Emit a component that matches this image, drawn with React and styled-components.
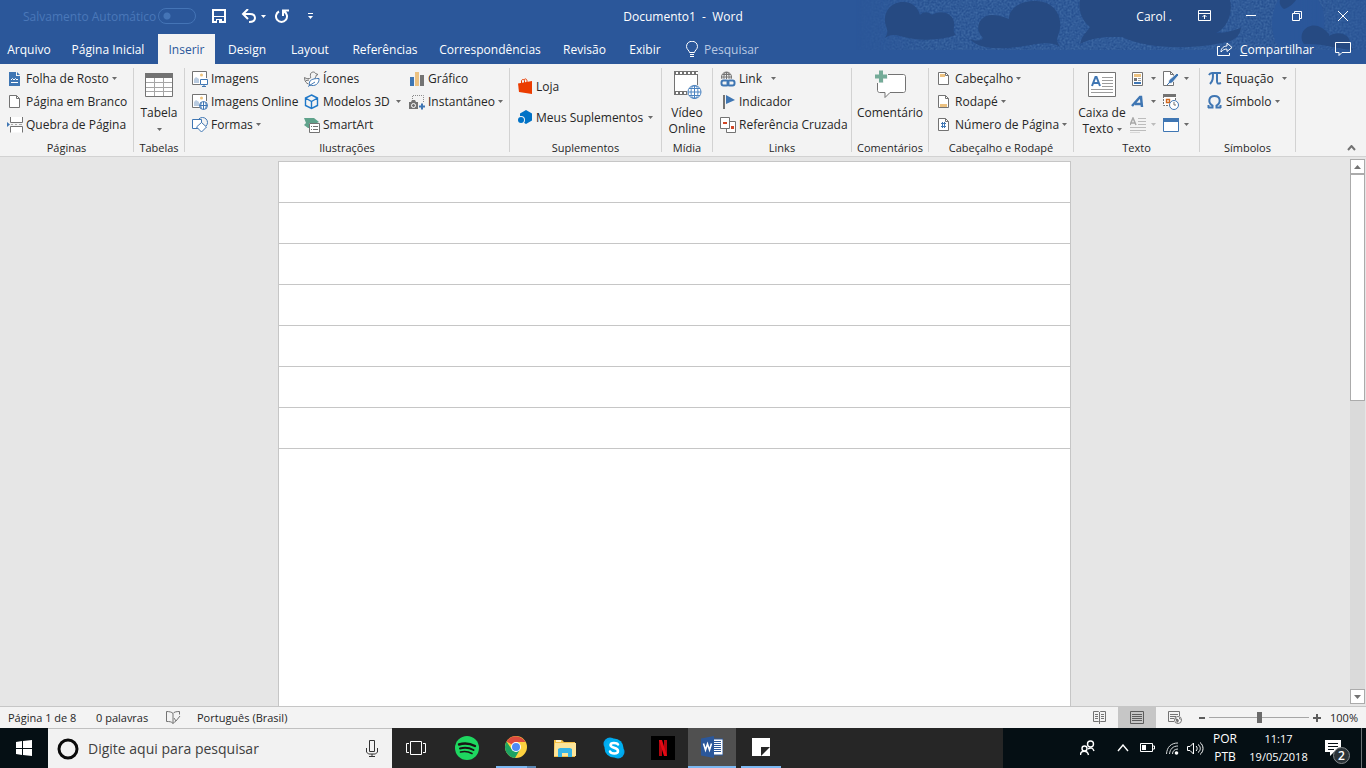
import React, { useState } from "react";
import styled, { createGlobalStyle } from "styled-components";

const GlobalStyle = createGlobalStyle`
  * {
    box-sizing: border-box;
  }

  body {
    margin: 0;
    overflow: hidden;
    font-family: "Open Sans", "Noto Sans", sans-serif;
    font-size: 12px;
    color: #262626;
  }

  button, input {
    font: inherit;
    color: inherit;
    margin: 0;
    padding: 0;
    border: none;
    background: none;
  }

  svg {
    display: block;
    flex: none;
  }
`;

const Window = styled.div`
  height: 100vh;
  display: flex;
  flex-direction: column;
  white-space: nowrap;
`;

/* ---------- header ---------- */

const Header = styled.header`
  position: relative;
  background: #2b579a;
  color: #ffffff;
`;

const Clouds = styled.svg`
  position: absolute;
  top: 0;
  right: 0;
`;

const TitleBar = styled.div`
  position: relative;
  display: grid;
  grid-template-columns: 1fr auto 1fr;
  align-items: center;
  height: 32px;
`;

const QuickAccess = styled.div`
  display: flex;
  align-items: center;
  padding-left: 23px;
`;

const AutoSave = styled.label`
  display: flex;
  align-items: center;
  justify-content: space-between;
  width: 173px;
  color: #4a78b9;
`;

const Toggle = styled.input`
  appearance: none;
  width: 38px;
  height: 16px;
  border: 1px solid #4474b6;
  border-radius: 8px;
  background: radial-gradient(circle at 8px 7px, #4474b6 3px, transparent 4px);
`;

const QuickButton = styled.button`
  display: flex;
  align-items: center;
  justify-content: center;
  gap: 4px;
  height: 24px;
  margin-left: ${(p) => p.$gap}px;
`;

const Title = styled.h1`
  margin: 0;
  font-size: 12px;
  font-weight: 400;
  white-space: pre;
`;

const WindowControls = styled.div`
  display: flex;
  align-items: center;
  justify-content: flex-end;
`;

const UserButton = styled.button`
  padding-right: 10px;
`;

const ControlButton = styled.button`
  display: flex;
  align-items: center;
  justify-content: center;
  width: 46px;
  height: 32px;
`;

const TabRow = styled.nav`
  position: relative;
  display: flex;
  align-items: center;
  height: 32px;
  padding-top: 2px;
`;

const Tab = styled.button`
  width: ${(p) => p.$width}px;
  height: 30px;
  text-align: center;
  background: ${(p) => (p.$active ? "#f3f3f3" : "transparent")};
  color: ${(p) => (p.$active ? "#2b579a" : "#ffffff")};
`;

const TellMe = styled.label`
  display: flex;
  align-items: center;
  gap: 6px;
  margin-left: 14px;
`;

const TellMeInput = styled.input`
  width: 90px;
  outline: none;

  &::placeholder {
    color: #b8c8e2;
    opacity: 1;
  }
`;

const ShareArea = styled.div`
  display: flex;
  align-items: center;
  gap: 21px;
  margin-left: auto;
  padding-right: 15px;
`;

const ShareButton = styled.button`
  display: flex;
  align-items: center;
  gap: 7px;
`;

/* ---------- ribbon ---------- */

const Ribbon = styled.div`
  display: flex;
  height: 93px;
  background: #f3f3f3;
  border-bottom: 1px solid #d2d2d2;
`;

const GroupBox = styled.section`
  display: flex;
  width: ${(p) => p.$width}px;
`;

const GroupContent = styled.div`
  display: flex;
  flex-direction: column;
  flex: 1;
  min-width: 0;
`;

const GroupBody = styled.div`
  display: flex;
  height: 76px;
  padding: 3px 0 4px ${(p) => p.$pad}px;
`;

const GroupLabel = styled.h2`
  margin: 0;
  font-size: 11px;
  font-weight: 400;
  line-height: 16px;
  text-align: center;
`;

const Divider = styled.div`
  width: 1px;
  margin: 4px 0;
  background: #d2d2d2;
`;

const Column = styled.div`
  display: flex;
  flex-direction: column;
  justify-content: center;
  width: ${(p) => (p.$width ? `${p.$width}px` : "100%")};
`;

const Command = styled.button`
  display: flex;
  align-items: center;
  gap: 3px;
  width: 100%;
  height: ${(p) => (p.$tall ? 31 : 23)}px;
  padding-right: 8px;
`;

const CommandArrow = styled.span`
  margin-left: ${(p) => (p.$split ? "auto" : "0")};
`;

const BigCommand = styled.button`
  display: flex;
  flex-direction: column;
  align-items: center;
  width: ${(p) => (p.$width ? `${p.$width}px` : "100%")};
  height: 72px;
  line-height: 16px;
`;

const BigIcon = styled.span`
  display: flex;
  align-items: center;
  justify-content: center;
  height: 36px;
  margin-bottom: 2px;
`;

const BigLine = styled.span`
  display: flex;
  align-items: center;
  gap: 3px;
  height: 16px;
`;

const IconCommand = styled.button`
  display: flex;
  align-items: center;
  gap: 5px;
  height: 23px;
`;

const Collapse = styled.button`
  align-self: flex-end;
  margin-left: auto;
  padding: 0 10px 5px;
`;

/* ---------- document ---------- */

const Workspace = styled.main`
  display: flex;
  flex: 1;
  min-height: 0;
  background: #e6e6e6;
`;

const Canvas = styled.div`
  display: flex;
  flex: 1;
  flex-direction: column;
  align-items: center;
  padding-top: 4px;
  overflow: hidden;
`;

const Sheet = styled.article`
  flex: ${(p) => (p.$last ? "1" : "none")};
  width: 793px;
  max-width: 100%;
  height: 41px;
  background: #ffffff;
  border: 1px solid #c6c6c6;
  border-top: none;
  border-bottom-width: ${(p) => (p.$last ? 0 : 1)}px;

  &:first-child {
    height: 42px;
    border-top: 1px solid #c6c6c6;
  }
`;

const ScrollBar = styled.div`
  display: flex;
  flex-direction: column;
  width: 15px;
  margin: 2px 1px;
  background: #dadada;
`;

const ScrollButton = styled.button`
  display: flex;
  align-items: center;
  justify-content: center;
  height: 15px;
  background: #ffffff;
  border: 1px solid #ababab;
`;

const ScrollTrack = styled.div`
  flex: 1;
`;

const ScrollThumb = styled.div`
  height: 44%;
  background: #ffffff;
  border: 1px solid #ababab;
`;

/* ---------- status bar ---------- */

const StatusBar = styled.footer`
  display: flex;
  align-items: center;
  height: 22px;
  padding-left: 8px;
  background: #f3f3f3;
  border-top: 1px solid #c6c6c6;
  font-size: 11px;
`;

const StatusItem = styled.button`
  width: ${(p) => p.$width}px;
  text-align: left;
`;

const ViewButton = styled.button`
  display: flex;
  align-items: center;
  justify-content: center;
  width: 38px;
  height: 21px;
  background: ${(p) => (p.$active ? "#c6c6c6" : "transparent")};
`;

const ViewArea = styled.div`
  display: flex;
  align-items: center;
  margin-left: auto;
`;

const ZoomArea = styled.div`
  display: flex;
  align-items: center;
  gap: 4px;
  padding: 0 8px 0 5px;
`;

const ZoomSlider = styled.input`
  appearance: none;
  width: 100px;
  height: 12px;
  background: linear-gradient(#a6a6a6, #a6a6a6) center / 100% 1px no-repeat;

  &::-webkit-slider-thumb {
    appearance: none;
    width: 5px;
    height: 11px;
    background: #6a6a6a;
  }
`;

const ZoomValue = styled.button`
  margin-left: 5px;
`;

/* ---------- taskbar ---------- */

const TaskBar = styled.div`
  display: flex;
  height: 40px;
  background: #050f14;
  color: #ffffff;
`;

const StartButton = styled.button`
  display: flex;
  align-items: center;
  justify-content: center;
  width: 48px;
`;

const SearchBox = styled.label`
  display: flex;
  align-items: center;
  width: 344px;
  padding: 0 14px 0 9px;
  background: #f2f2f2;
  border-top: 1px solid #c0c0c0;
  color: #333333;
`;

const SearchInput = styled.input`
  flex: 1;
  min-width: 0;
  margin-left: 9px;
  font-size: 14px;
  outline: none;

  &::placeholder {
    color: #404040;
    opacity: 1;
  }
`;

const AppList = styled.div`
  display: flex;
  flex: 1;
  gap: 1px;
  background: #262626;
`;

const TaskButton = styled.button`
  display: flex;
  flex-direction: column;
  align-items: center;
  width: 48px;
  margin-right: ${(p) => (p.$first ? 2 : 0)}px;
  background: ${(p) => (p.$active ? "#505050" : "transparent")};
`;

const TaskIcon = styled.span`
  display: flex;
  align-items: center;
  flex: 1;
`;

const Running = styled.span`
  width: ${(p) => (p.$wide ? 48 : 40)}px;
  height: 2px;
  background: #7cb8f2;
  border-right: ${(p) => (p.$stacked ? "9px solid #5b87b3" : "none")};
`;

const Tray = styled.div`
  display: flex;
  align-items: center;
  width: 363px;
  padding-left: 77px;
`;

const TrayButton = styled.button`
  display: flex;
  align-items: center;
  margin-right: ${(p) => p.$gap}px;
`;

const TrayText = styled.button`
  width: ${(p) => p.$width}px;
  text-align: center;
  line-height: 18px;
  font-size: ${(p) => p.$size || 12}px;
`;

const ActionCenter = styled.button`
  position: relative;
  margin-left: 9px;
`;

const Badge = styled.span`
  position: absolute;
  left: 8px;
  top: 8px;
  width: 17px;
  height: 17px;
  border: 1px solid #858a8d;
  border-radius: 50%;
  background: #2b3338;
  font-size: 12px;
  font-weight: 600;
  line-height: 15px;
  text-align: center;
`;

const ShowDesktop = styled.button`
  align-self: stretch;
  width: 5px;
  margin-left: auto;
  border-left: 1px solid #6b7275;
`;

/* ---------- icons ---------- */

const GRAY = "#737373";
const BLUE = "#3f76b3";

const Svg = ({ w = 16, h = 16, children, ...rest }) => (
  <svg width={w} height={h} viewBox={`0 0 ${w} ${h}`} fill="none" aria-hidden="true" {...rest}>
    {children}
  </svg>
);

const Arrow = ({ color = "#6a6a6a" }) => (
  <Svg w={5} h={3}>
    <path d="M0 0h5L2.500 3z" fill={color} />
  </Svg>
);

const SheetOutline = ({ x = 2, children }) => (
  <Svg>
    <path d={`M${x + 0.5} 1.5h7l3 3v9h-10z`} fill="#fff" stroke={GRAY} />
    <path d={`M${x + 7.5} 1.5v3h3`} stroke={GRAY} />
    {children}
  </Svg>
);

const CoverIcon = () => (
  <Svg>
    <path d="M2 1h7v4h4v10H2z" fill={BLUE} />
    <path d="M10 1l3 3h-3z" fill={BLUE} />
    <path d="M4 9l1.500-1.500L7 9l1.500-1.500L10 9l1-1M4 11.500h7" stroke="#fff" />
  </Svg>
);

const BreakIcon = () => (
  <Svg>
    <path d="M3.500 0v5.500h12V0M3.500 15.500v-6h12v6" fill="#fff" stroke={GRAY} />
    <path d="M0 5l3 2.500L0 10z" fill={BLUE} />
    <path d="M4 7.500h2m2 0h2m2 0h3" stroke="#aaa" />
  </Svg>
);

const TableIcon = () => (
  <Svg w={28} h={26}>
    <path d="M.5 1.500h27v23H.5z" fill="#fff" stroke={GRAY} />
    <path d="M0 1h28v5H0z" fill={GRAY} />
    <path d="M9.500 6v18M18.500 6v18M1 10.500h26M1 15.500h26M1 19.500h26" stroke="#a6a6a6" />
  </Svg>
);

const PictureBase = () => (
  <>
    <path d="M14.500 7V.5H.5v13H8" fill="#fff" stroke={GRAY} />
    <path d="M2 12V8l2-2 3 2v4z" fill="#b9cbe0" />
    <circle cx="9.500" cy="4" r="1.500" fill="#eec27c" />
  </>
);

const ImagesIcon = () => (
  <Svg>
    <PictureBase />
    <path d="M8.500 8.500h7v5h-7z" fill="#fff" stroke={BLUE} />
    <path d="M12 13v2m-2 .5h4" stroke={BLUE} />
  </Svg>
);

const ImagesOnlineIcon = () => (
  <Svg>
    <PictureBase />
    <circle cx="11.500" cy="11.500" r="4" fill="#fff" stroke={BLUE} />
    <path d="M7.500 11.500h8M11.500 7.500v8M9.500 8.500c-1 2-1 4 0 6M13.500 8.500c1 2 1 4 0 6" stroke={BLUE} />
  </Svg>
);

const ShapesIcon = () => (
  <Svg>
    <circle cx="10.500" cy="5.500" r="5" stroke={BLUE} />
    <path d="M.5 2.500h9v9h-9z" fill="#fff" stroke={BLUE} />
    <path d="M9.500 5.500l5 4.500-5 5-5-5z" fill="#fff" stroke={BLUE} />
  </Svg>
);

const IconsIcon = () => (
  <Svg>
    <path
      d="M.5 6.500c2 1.500 5 1.500 6 .5.500-1-.5-2 0-4 .5-2 4-3 5-.5l2.500 1-2 1c0 2-1 3-2 3M.5 6.500c0 4 2 6 4 6.500M2 9.500l3-.5"
      stroke={GRAY}
    />
    <path d="M5.500 14c-1-5 3-6.500 9.500-6.500.5 5-4 8.500-9.500 6.500zM4 15.500l7-4.500" fill="#fff" stroke={BLUE} />
  </Svg>
);

const CubeIcon = () => (
  <Svg>
    <path d="M7.500 1l6 3v7.500l-6 3-6-3V4zM1.500 4l6 3.500 6-3.500M7.500 7.500v7" stroke="#1f78c8" strokeWidth="1.400" />
  </Svg>
);

const SmartArtIcon = () => (
  <Svg>
    <path d="M0 1h10l5 4-2 1H5v5H4L0 8l2-2z" fill="#5fa28b" />
    <path d="M5.500 6.500h10v9h-10z" fill="#fff" stroke={GRAY} />
    <path d="M7 9.500h1m1 0h5M7 12.500h1m1 0h5" stroke={GRAY} />
  </Svg>
);

const ChartIcon = () => (
  <Svg>
    <path d="M1 6h4v9H1z" fill={BLUE} />
    <path d="M6 1h4v14H6z" fill="#ecc180" />
    <path d="M11 4h4v11h-4z" fill={GRAY} />
  </Svg>
);

const ScreenshotIcon = () => (
  <Svg>
    <path d="M3.500 5V1.500h11V9" stroke="#8a8a8a" strokeDasharray="1 1" />
    <path d="M0 8h2l1-2h3l1 2h2v7H0z" fill={GRAY} />
    <circle cx="4.500" cy="11.500" r="2" fill={GRAY} stroke="#fff" />
    <path d="M10 12.500h6M13 9.500v6" stroke={BLUE} strokeWidth="2" />
  </Svg>
);

const StoreIcon = () => (
  <Svg>
    <path d="M1 5.500L15 3v13L2 14z" fill="#eb3c00" />
    <path d="M4.500 6V3c0-2 3-2 3 0v2M7 2c1-2 3-1 3 1v2" stroke="#eb3c00" />
  </Svg>
);

const AddinsIcon = () => (
  <Svg>
    <path d="M3 4.500L9 1l6 3.500v7L9 15l-6-3.500z" fill="#0072c6" />
    <circle cx="4" cy="11" r="4" fill="#f3f3f3" />
    <circle cx="4" cy="11" r="3" fill="#0072c6" />
  </Svg>
);

const VideoIcon = () => (
  <Svg w={29} h={30}>
    <path d="M1.500 1.500h23v23h-23z" fill="#fff" stroke={GRAY} />
    <path d="M1 3h24M1 23h24" stroke={GRAY} strokeWidth="4" />
    <path d="M3 3h22M3 23h22" stroke="#fff" strokeWidth="2" strokeDasharray="2 2" />
    <circle cx="21.500" cy="22" r="7.500" fill="#f3f3f3" />
    <circle cx="21.500" cy="22" r="6.500" fill="#fff" stroke="#4b83c0" />
    <path d="M15 22h13M21.500 15.500v13M16 18.500h11M16 25.500h11" stroke="#4b83c0" />
    <ellipse cx="21.500" cy="22" rx="3.500" ry="6.500" stroke="#4b83c0" />
  </Svg>
);

const LinkIcon = () => (
  <Svg>
    <circle cx="6.500" cy="6" r="5" stroke={GRAY} />
    <path d="M1.500 6h10M6.500 1v8M2.500 3.500h8M4.500 9c-1-2-1-5 1-8M8.500 9c1-2 1-5-1-8" stroke={GRAY} />
    <path d="M0 8h16v8H0z" fill="#f3f3f3" />
    <rect x="1.500" y="9.500" width="7" height="5" rx="2" stroke={BLUE} strokeWidth="2" />
    <rect x="7.500" y="9.500" width="7" height="5" rx="2" stroke={BLUE} strokeWidth="2" />
  </Svg>
);

const FlagIcon = () => (
  <Svg>
    <path d="M4 1v14" stroke={GRAY} strokeWidth="2" />
    <path d="M6 1l9 5-9 4z" fill={BLUE} />
  </Svg>
);

const CrossRefIcon = () => (
  <Svg>
    <path d="M6.500 4.500h9v11h-9z" fill="#fff" stroke={GRAY} />
    <path d="M.5.5h9v11h-9z" fill="#fff" stroke={GRAY} />
    <path d="M3 5h4v2H3zM11 9h3v3h-3z" fill="#d24726" />
  </Svg>
);

const CommentIcon = () => (
  <Svg w={32} h={30}>
    <path
      d="M3.500 6.500c0-2 1-2 2-2h24c1 0 2 1 2 2v14c0 1-1 2-2 2H16l-5 5v-5H5.500c-1 0-2-1-2-2z"
      fill="#fff"
      stroke={GRAY}
    />
    <path d="M0 0h14v9h-4v4H0z" fill="#f3f3f3" />
    <path d="M1 6.500h12M7 .5v12" stroke="#74ab98" strokeWidth="4" />
  </Svg>
);

const TextBoxIcon = () => (
  <Svg w={28} h={26}>
    <path d="M.5.5h27v24H.5z" fill="#fff" stroke={GRAY} />
    <path d="M4 14L7.500 5h1L12 14M5.500 11h5" stroke={BLUE} strokeWidth="2" />
    <path d="M14 5.500h11M14 8.500h11M14 11.500h11M14 14.500h11M3 17.500h22M3 20.500h22" stroke="#9c9c9c" />
  </Svg>
);

const QuickPartsIcon = () => (
  <Svg>
    <path d="M2.500 1.500h10v13h-10z" fill="#fff" stroke={GRAY} />
    <path d="M4 3h7v3H4z" fill="#ecc180" />
    <path d="M4 7h3v3H4z" fill={GRAY} />
    <path d="M8 7.500h3M8 9.500h3" stroke="#9c9c9c" />
    <path d="M4 11h7v2H4z" fill={BLUE} />
  </Svg>
);

const WordArtIcon = () => (
  <Svg>
    <path d="M2 12L10 3h1l1 10M5 10h6" stroke={BLUE} strokeWidth="2.500" />
  </Svg>
);

const DropCapIcon = () => (
  <Svg>
    <path d="M0 8L3 1l3 7M1 6h4" stroke="#a8a8a8" strokeWidth="1.500" />
    <path d="M8 1.500h8M8 4.500h8M8 7.500h8M0 10.500h16M0 13.500h16M0 16h10" stroke="#bcbcbc" />
  </Svg>
);

const SignatureIcon = () => (
  <Svg>
    <path d="M.5.500h7l3 3v11H.5z" fill="#fff" stroke={GRAY} />
    <path d="M7.500.5v3h3" stroke={GRAY} />
    <path d="M5 13l1-4 8-7 2 2-7 8z" fill={BLUE} stroke="#f3f3f3" />
    <path d="M4 14l3-3" stroke={BLUE} />
  </Svg>
);

const DateIcon = () => (
  <Svg>
    <path d="M.5 2v9.500h12V2" fill="#fff" stroke={GRAY} strokeDasharray="2 1" />
    <path d="M0 0h13v3H0z" fill={GRAY} />
    <path d="M3.500 5.500h3v3h-3z" stroke="#d2691e" strokeWidth="1.400" />
    <circle cx="11" cy="11" r="4.500" fill="#fff" stroke={BLUE} />
    <path d="M11 8v3h2" stroke={GRAY} />
  </Svg>
);

const ObjectIcon = () => (
  <Svg>
    <path d="M.5 1.500h15v13H.5z" fill="#fff" stroke={BLUE} />
    <path d="M0 1h16v4H0z" fill={BLUE} />
  </Svg>
);

const PiIcon = () => (
  <Svg>
    <path d="M2 4c1-2 2-2 3-2h9M6 2c0 5 0 8-3 11M10 2v8c0 3 1 3 4 2" stroke={BLUE} strokeWidth="2" />
  </Svg>
);

const OmegaIcon = () => (
  <Svg>
    <path
      d="M1 13.500h4.500v-2C1 9 1 2 7.500 2s6.500 7 2 9.500v2H14M1.500 11v3M13.500 11v3"
      stroke={BLUE}
      strokeWidth="2"
    />
  </Svg>
);

const Chevron = ({ w = 9, h = 6, color = GRAY, width = 2 }) => (
  <Svg w={w} h={h}>
    <path d={`M1 ${h - 1}L${w / 2} 1 ${w - 1} ${h - 1}`} stroke={color} strokeWidth={width} />
  </Svg>
);

/* ---------- ribbon parts ---------- */

const Group = ({ label, width, pad = 7, children }) => (
  <GroupBox $width={width} aria-label={label}>
    <GroupContent>
      <GroupBody $pad={pad}>{children}</GroupBody>
      <GroupLabel>{label}</GroupLabel>
    </GroupContent>
    <Divider />
  </GroupBox>
);

const Item = ({ icon, text, menu, split, tall }) => (
  <Command $tall={tall}>
    {icon}
    {text}
    {(menu || split) && (
      <CommandArrow $split={split}>
        <Arrow />
      </CommandArrow>
    )}
  </Command>
);

const Big = ({ icon, lines, menu, width }) => (
  <BigCommand $width={width}>
    <BigIcon>{icon}</BigIcon>
    {lines.map((line, i) => (
      <BigLine key={i}>
        {line}
        {menu && i === lines.length - 1 && <Arrow />}
      </BigLine>
    ))}
  </BigCommand>
);

const IconOnly = ({ icon, name, menu, disabled }) => (
  <IconCommand aria-label={name} disabled={disabled}>
    {icon}
    {menu && <Arrow color={disabled ? "#bcbcbc" : undefined} />}
  </IconCommand>
);

const tabs = [
  { name: "Arquivo", width: 58 },
  { name: "Página Inicial", width: 100 },
  { name: "Inserir", width: 57 },
  { name: "Design", width: 64 },
  { name: "Layout", width: 62 },
  { name: "Referências", width: 88 },
  { name: "Correspondências", width: 122 },
  { name: "Revisão", width: 67 },
  { name: "Exibir", width: 54 },
];

const AppHeader = () => {
  const [active, setActive] = useState("Inserir");

  return (
    <Header>
      <Clouds width="510" height="52" viewBox="0 0 510 52" aria-hidden="true">
        <defs>
          <linearGradient id="fade">
            <stop offset="0" stopColor="#fff" stopOpacity="0" />
            <stop offset="0.150" stopColor="#fff" stopOpacity="0.800" />
            <stop offset="0.850" stopColor="#fff" stopOpacity="0.800" />
            <stop offset="1" stopColor="#fff" stopOpacity="0.400" />
          </linearGradient>
          <mask id="edge">
            <path d="M0 0h510v50H0z" fill="url(#fade)" />
          </mask>
          <filter id="grain" x="0" y="0" width="100%" height="100%">
            <feTurbulence type="fractalNoise" baseFrequency="0.5" numOctaves="2" />
            <feColorMatrix values="0 0 0 0 0.180  0 0 0 0 0.370  0 0 0 0 0.640  1.200 0 0 0 -0.350" />
          </filter>
        </defs>
        <g mask="url(#edge)">
          <path d="M0 0h510v50H0z" fill="#27508e" />
          <path d="M0 0h510v50H0z" filter="url(#grain)" opacity="0.600" />
          <path d="M424 50c-8-12-12-32-2-50h40c10 14 8 36-4 50z" fill="#2b579a" />
        </g>
        <g fill="#264a82">
          <path d="M29 38c3-5 3-6 1-12C26 12 35 2 47 2c10 0 15 6 17 13 4-4 9-3 12 0 8-6 24-2 22 11-1 7 1 8 2 9-16 6-40 6-56 1-7-2-11-1-15 2z" />
          <path d="M114 39c8 3 12 1 13-1-10-10-3-23 9-23 8 0 14 3 17 4C153 8 164 1 180 1c17 0 26 14 24 27-1 10-6 9 0 19-7-5-14-4-24-3-24 5-56 8-66-5z" />
          <path d="M224 0h150c3 14-3 28-14 33 8 0 16-2 25-5-2 12-11 14-25 16-38 7-75 2-94-7-18 0-29 0-42 7 2-9 7-12 10-17C225 20 222 8 224 0z" />
          <path d="M448 44c-8-12 6-24 18-16 6 4 8 7 7 8 9-6 22-2 21 8l3 6c-16-1-30-7-49-6z" />
          <path d="M424 0h16c-3 4-6 7-12 9-3-2-5-5-4-9z" />
        </g>
      </Clouds>

      <TitleBar>
        <QuickAccess>
          <AutoSave>
            Salvamento Automático
            <Toggle type="checkbox" disabled />
          </AutoSave>
          <QuickButton $gap={16} aria-label="Salvar">
            <Svg w={14} h={14}>
              <path d="M1 1h12v12H1z" stroke="#fff" strokeWidth="2" />
              <path d="M2 7.500h10" stroke="#fff" />
              <path d="M4 10h6v4H4z" fill="#fff" />
              <path d="M5 11h2v3H5z" fill="#2b579a" />
            </Svg>
          </QuickButton>
          <QuickButton $gap={15} aria-label="Desfazer">
            <Svg w={16} h={14}>
              <path d="M2 5h7c3 0 5 1 5 4s-3 4-6 4" stroke="#fff" strokeWidth="2" />
              <path d="M7 0L2 5l5 5" stroke="#fff" strokeWidth="2" />
            </Svg>
            <Arrow color="#fff" />
          </QuickButton>
          <QuickButton $gap={9} aria-label="Refazer">
            <Svg w={15} h={14}>
              <path d="M4 2.500a5.500 5.500 0 1 0 5 0M8 7V1.500h6" stroke="#fff" strokeWidth="2" />
            </Svg>
          </QuickButton>
          <QuickButton $gap={18} aria-label="Personalizar">
            <Svg w={5} h={6}>
              <path d="M0 .5h5" stroke="#fff" />
              <path d="M0 3h5L2.500 6z" fill="#fff" />
            </Svg>
          </QuickButton>
        </QuickAccess>
        <Title>{"Documento1  -  Word"}</Title>
        <WindowControls>
          <UserButton>Carol .</UserButton>
          <ControlButton aria-label="Opções da faixa">
            <Svg w={14} h={12}>
              <path d="M.5.5h12v10H.5zM1 3.500h11M6.500 9V5M4.500 7l2-2 2 2" stroke="#fff" />
            </Svg>
          </ControlButton>
          <ControlButton aria-label="Minimizar">
            <Svg w={10} h={2}>
              <path d="M0 .5h10" stroke="#fff" />
            </Svg>
          </ControlButton>
          <ControlButton aria-label="Restaurar">
            <Svg w={10} h={10}>
              <path d="M.5 2.500h7v7h-7zM2.500 2V.5h7v7H8" stroke="#fff" />
            </Svg>
          </ControlButton>
          <ControlButton aria-label="Fechar">
            <Svg w={10} h={10}>
              <path d="M0 0l10 10M10 0L0 10" stroke="#fff" />
            </Svg>
          </ControlButton>
        </WindowControls>
      </TitleBar>

      <TabRow>
        {tabs.map((tab) => (
          <Tab
            key={tab.name}
            $width={tab.width}
            $active={tab.name === active}
            onClick={() => setActive(tab.name)}
          >
            {tab.name}
          </Tab>
        ))}
        <TellMe>
          <Svg w={12} h={17}>
            <path d="M3.500 11.500c0-2-3-3-3-6 0-7 11-7 11 0 0 3-3 4-3 6zM4 13.500h4M4 15.500h4" stroke="#fff" />
          </Svg>
          <TellMeInput placeholder="Pesquisar" aria-label="Pesquisar" />
        </TellMe>
        <ShareArea>
          <ShareButton>
            <Svg w={16} h={14}>
              <path d="M3 4.500H.5v9h12V11" stroke="#fff" />
              <path d="M4 10c0-4 3-6 6-6V1l5 4.500-5 4V7c-3 0-4 1-6 3z" stroke="#fff" />
            </Svg>
            <span>
              <u>C</u>ompartilhar
            </span>
          </ShareButton>
          <button aria-label="Comentários">
            <Svg w={16} h={15}>
              <path d="M.5.5h15v10H7l-3 3v-3H.5z" stroke="#fff" />
            </Svg>
          </button>
        </ShareArea>
      </TabRow>
    </Header>
  );
};

const InsertRibbon = () => (
  <Ribbon>
    <Group label="Páginas" width={134}>
      <Column>
        <Item icon={<CoverIcon />} text="Folha de Rosto" menu />
        <Item icon={<SheetOutline />} text="Página em Branco" />
        <Item icon={<BreakIcon />} text="Quebra de Página" />
      </Column>
    </Group>
    <Group label="Tabelas" width={51} pad={0}>
      <Big icon={<TableIcon />} lines={["Tabela", ""]} menu />
    </Group>
    <Group label="Ilustrações" width={325}>
      <Column $width={112}>
        <Item icon={<ImagesIcon />} text="Imagens" />
        <Item icon={<ImagesOnlineIcon />} text="Imagens Online" />
        <Item icon={<ShapesIcon />} text="Formas" menu />
      </Column>
      <Column $width={105}>
        <Item icon={<IconsIcon />} text="Ícones" />
        <Item icon={<CubeIcon />} text="Modelos 3D" split />
        <Item icon={<SmartArtIcon />} text="SmartArt" />
      </Column>
      <Column $width={100}>
        <Item icon={<ChartIcon />} text="Gráfico" />
        <Item icon={<ScreenshotIcon />} text="Instantâneo" menu />
        <Command as="span" />
      </Column>
    </Group>
    <Group label="Suplementos" width={152}>
      <Column>
        <Item icon={<StoreIcon />} text="Loja" tall />
        <Item icon={<AddinsIcon />} text="Meus Suplementos" split tall />
      </Column>
    </Group>
    <Group label="Mídia" width={51} pad={0}>
      <Big icon={<VideoIcon />} lines={["Vídeo", "Online"]} />
    </Group>
    <Group label="Links" width={139}>
      <Column>
        <Column $width={64}>
          <Item icon={<LinkIcon />} text="Link" split />
        </Column>
        <Item icon={<FlagIcon />} text="Indicador" />
        <Item icon={<CrossRefIcon />} text="Referência Cruzada" />
      </Column>
    </Group>
    <Group label="Comentários" width={77} pad={0}>
      <Big icon={<CommentIcon />} lines={["Comentário"]} />
    </Group>
    <Group label="Cabeçalho e Rodapé" width={145}>
      <Column>
        <Item
          icon={
            <SheetOutline>
              <path d="M4 3h5v3H4z" fill="#ecc180" />
            </SheetOutline>
          }
          text="Cabeçalho"
          menu
        />
        <Item
          icon={
            <SheetOutline>
              <path d="M4 10h7v3H4z" fill="#ecc180" />
            </SheetOutline>
          }
          text="Rodapé"
          menu
        />
        <Item
          icon={
            <SheetOutline>
              <path d="M6.500 5v6M8.500 5v6M5 6.500h5M5 9.500h5" stroke={BLUE} />
            </SheetOutline>
          }
          text="Número de Página"
          menu
        />
      </Column>
    </Group>
    <Group label="Texto" width={126} pad={0}>
      <Big icon={<TextBoxIcon />} lines={["Caixa de", "Texto"]} menu width={56} />
      <Column $width={33}>
        <IconOnly icon={<QuickPartsIcon />} name="Partes Rápidas" menu />
        <IconOnly icon={<WordArtIcon />} name="WordArt" menu />
        <IconOnly icon={<DropCapIcon />} name="Letra Capitular" menu disabled />
      </Column>
      <Column $width={36}>
        <IconOnly icon={<SignatureIcon />} name="Linha de Assinatura" menu />
        <IconOnly icon={<DateIcon />} name="Data e Hora" />
        <IconOnly icon={<ObjectIcon />} name="Objeto" menu />
      </Column>
    </Group>
    <Group label="Símbolos" width={96}>
      <Column>
        <Item icon={<PiIcon />} text="Equação" split />
        <Item icon={<OmegaIcon />} text="Símbolo" menu />
        <Command as="span" />
      </Column>
    </Group>
    <Collapse aria-label="Recolher">
      <Chevron />
    </Collapse>
  </Ribbon>
);

const Document = () => (
  <Workspace>
    <Canvas>
      {[1, 2, 3, 4, 5, 6, 7, 8].map((n) => (
        <Sheet key={n} $last={n === 8} />
      ))}
    </Canvas>
    <ScrollBar>
      <ScrollButton aria-label="Para cima">
        <Svg w={7} h={4}>
          <path d="M0 4h7L3.500 0z" fill={GRAY} />
        </Svg>
      </ScrollButton>
      <ScrollTrack>
        <ScrollThumb />
      </ScrollTrack>
      <ScrollButton aria-label="Para baixo">
        <Svg w={7} h={4}>
          <path d="M0 0h7L3.500 4z" fill={GRAY} />
        </Svg>
      </ScrollButton>
    </ScrollBar>
  </Workspace>
);

const Status = () => (
  <StatusBar>
    <StatusItem $width={88}>Página 1 de 8</StatusItem>
    <StatusItem $width={70}>0 palavras</StatusItem>
    <StatusItem $width={31} aria-label="Revisão de texto">
      <Svg w={15} h={13}>
        <path d="M7 2.500C6 1 3 .5.5.5v10c3 0 5 0 6.500 2 1-1 2-2 3-2M7 2.500v10M7 2.500C8 1 10 .5 13.500.5v3M8 7l2 3 4-5" stroke={GRAY} />
      </Svg>
    </StatusItem>
    <StatusItem $width={100}>Português (Brasil)</StatusItem>
    <ViewArea>
      <ViewButton aria-label="Modo de leitura">
        <Svg w={13} h={13}>
          <path d="M.5.5h5l1 1 1-1h5v10h-5l-1 1-1-1h-5zM6.500 1v12M2 3.500h3M2 5.500h3M2 7.500h3M8 3.500h3M8 5.500h3M8 7.500h3" stroke={GRAY} />
        </Svg>
      </ViewButton>
      <ViewButton $active aria-label="Layout de impressão">
        <Svg w={14} h={13}>
          <path d="M.5.5h13v12H.5zM2 3.500h10M2 5.500h10M2 7.500h10M2 9.500h10" stroke="#5c5c5c" />
        </Svg>
      </ViewButton>
      <ViewButton aria-label="Layout da Web">
        <Svg w={14} h={13}>
          <path d="M11.500 5V.5H.5v10H6M2 3.500h8M2 5.500h6M2 7.500h4" stroke={GRAY} />
          <circle cx="10" cy="9" r="3.500" fill="#fff" stroke={GRAY} />
          <path d="M7 7l3 1 1 2-2 2zM11 6l2 3-2-1z" fill={GRAY} />
        </Svg>
      </ViewButton>
      <ZoomArea>
        <button aria-label="Reduzir">
          <Svg w={6} h={8}>
            <path d="M0 4h6" stroke="#5c5c5c" strokeWidth="2" />
          </Svg>
        </button>
        <ZoomSlider type="range" min="0" max="100" defaultValue="50" aria-label="Zoom" />
        <button aria-label="Ampliar">
          <Svg w={8} h={8}>
            <path d="M0 4h8M4 0v8" stroke="#5c5c5c" strokeWidth="2" />
          </Svg>
        </button>
        <ZoomValue>100%</ZoomValue>
      </ZoomArea>
    </ViewArea>
  </StatusBar>
);

const SpotifyIcon = () => (
  <Svg w={24} h={24}>
    <circle cx="12" cy="12" r="12" fill="#1ed760" />
    <path d="M4 8.500c5-1.500 11-1 16 1.500" stroke="#191414" strokeWidth="2.400" strokeLinecap="round" />
    <path d="M5 12.500c5-1.500 9-1 13.500 1.500" stroke="#191414" strokeWidth="2" strokeLinecap="round" />
    <path d="M5.500 16c4-1 8-.5 11.500 1.500" stroke="#191414" strokeWidth="1.600" strokeLinecap="round" />
  </Svg>
);

const ChromeIcon = () => (
  <Svg w={22} h={22}>
    <circle cx="11" cy="11" r="11" fill="#fdd13f" />
    <path d="M11 11L1.500 5.500A11 11 0 0 1 20.500 6H11z" fill="#dd4b3e" />
    <path d="M1.500 5.500A11 11 0 0 0 10 22l5-8.500-8.500-.5z" fill="#1da362" />
    <circle cx="11" cy="11" r="5" fill="#fff" />
    <circle cx="11" cy="11" r="4" fill="#4c8bf5" />
  </Svg>
);

const FolderIcon = () => (
  <Svg w={22} h={19}>
    <path d="M0 1h8l2 2h11v15H0z" fill="#f3bf45" />
    <path d="M1 4h21v13H0z" fill="#fde59a" />
    <path d="M2 1h5v2H2z" fill="#fff2c6" />
    <path d="M4 18v-8l2-1h10l2 1v8h-4v-4H8v4z" fill="#37b5e6" />
  </Svg>
);

const SkypeIcon = () => (
  <Svg w={22} h={22}>
    <circle cx="7" cy="7" r="6.500" fill="#00a5ec" />
    <circle cx="15" cy="15" r="6.500" fill="#00a5ec" />
    <circle cx="11" cy="11" r="9.500" fill="#00aff0" />
    <path
      d="M15 7.500C14 5.500 7.500 5 7.500 8c0 3.500 7.500 2 7.500 6 0 3.500-7 3-8 .5"
      stroke="#fff"
      strokeWidth="2.500"
      strokeLinecap="round"
    />
  </Svg>
);

const NetflixIcon = () => (
  <Svg w={24} h={24}>
    <path d="M0 0h24v24H0z" fill="#000" />
    <path d="M8 4h3v16H8zM13 4h3v16h-3z" fill="#b1060f" />
    <path d="M8 4h3l5 16h-3z" fill="#e50914" />
  </Svg>
);

const WordIcon = () => (
  <Svg w={22} h={22}>
    <path d="M12 3h10v16H12z" fill="#fff" stroke="#2b579a" />
    <path d="M13 5.500h7M13 7.500h7M13 9.500h7M13 11.500h7M13 13.500h7M13 15.500h7" stroke="#2b579a" />
    <path d="M0 2.500L13 0v22L0 19.500z" fill="#2b579a" />
    <path d="M2.500 7.500L4.500 14l2-6 2 6 2-6.500" stroke="#fff" strokeWidth="1.600" />
  </Svg>
);

const StickyIcon = () => (
  <Svg w={18} h={18}>
    <path d="M0 0h18v18H0z" fill="#fff" />
    <path d="M9 18V9h9z" fill="#262626" />
    <path d="M10 18l8-8v8z" fill="#fff" />
  </Svg>
);

const TaskViewIcon = () => (
  <Svg w={20} h={14}>
    <path d="M4.500.5h11v13h-11zM3 2.500H.5v9H3M17 2.500h2.500v9H17" stroke="#fff" />
  </Svg>
);

const apps = [
  { name: "Visão de tarefas", icon: <TaskViewIcon /> },
  { name: "Spotify", icon: <SpotifyIcon /> },
  { name: "Chrome", icon: <ChromeIcon />, running: true, stacked: true },
  { name: "Explorador", icon: <FolderIcon /> },
  { name: "Skype", icon: <SkypeIcon /> },
  { name: "Netflix", icon: <NetflixIcon /> },
  { name: "Word", icon: <WordIcon />, running: true, active: true },
  { name: "Notas", icon: <StickyIcon />, running: true },
];

const WindowsTaskbar = () => (
  <TaskBar>
    <StartButton aria-label="Iniciar">
      <Svg>
        <path d="M0 2l6-1v7H0zM7 1l9-1v8H7zM0 9h6v6l-6-1zM7 9h9v7l-9-1z" fill="#fff" />
      </Svg>
    </StartButton>
    <SearchBox>
      <Svg w={22} h={22}>
        <circle cx="11" cy="11" r="9" stroke="#0a0a0a" strokeWidth="3" />
      </Svg>
      <SearchInput placeholder="Digite aqui para pesquisar" />
      <Svg w={12} h={17}>
        <path d="M3.500.5h5v11h-5zM.5 8v4l2 2h7l2-2V8M6 14v3M3 16.500h6" stroke="#333" />
      </Svg>
    </SearchBox>
    <AppList>
      {apps.map((app, i) => (
        <TaskButton key={app.name} $first={i === 0} $active={app.active} aria-label={app.name}>
          <TaskIcon>{app.icon}</TaskIcon>
          {app.running && <Running $wide={app.active} $stacked={app.stacked} />}
        </TaskButton>
      ))}
    </AppList>
    <Tray>
      <TrayButton $gap={22} aria-label="Pessoas">
        <Svg w={15} h={16}>
          <circle cx="10.500" cy="4" r="3" stroke="#fff" strokeWidth="1.400" />
          <circle cx="4.500" cy="8.500" r="2.500" stroke="#fff" strokeWidth="1.400" />
          <path d="M.5 15c0-5 7-5 8 0M8 9c3-2 5-1 6 2" stroke="#fff" strokeWidth="1.400" />
        </Svg>
      </TrayButton>
      <TrayButton $gap={11} aria-label="Ícones ocultos">
        <Chevron w={12} h={8} color="#fff" width={1.4} />
      </TrayButton>
      <TrayButton $gap={11} aria-label="Bateria">
        <Svg w={15} h={10}>
          <path d="M.5.5h12v8H.5zM13 3h1.500v3H13" stroke="#fff" />
          <path d="M2 2h4v5H2z" fill="#fff" />
        </Svg>
      </TrayButton>
      <TrayButton $gap={8} aria-label="Wi-Fi">
        <Svg w={13} h={13}>
          <path d="M.5 12C1 5 5 1 12 1M3.500 12C4 7 7 4 12 4M6.500 12c0-3 2-5 5.500-5" stroke="#d8dbdc" />
          <circle cx="10.500" cy="11" r="1.800" fill="#fff" />
        </Svg>
      </TrayButton>
      <TrayButton $gap={5} aria-label="Volume">
        <Svg w={17} h={13}>
          <path d="M.5 4.500H3L6.500 1v11L3 8.500H.5zM9 4c1.500 1 1.500 4 0 5M11 2.500c3 2 3 6 0 8M13 .5c4 3 4 9 0 12" stroke="#fff" />
        </Svg>
      </TrayButton>
      <TrayText $width={32}>
        POR
        <br />
        PTB
      </TrayText>
      <TrayText $width={75} $size={11}>
        11:17
        <br />
        19/05/2018
      </TrayText>
      <ActionCenter aria-label="Notificações">
        <Svg w={24} h={18}>
          <path d="M0 1h16v12h-7l-4 4v-4H0z" fill="#fff" />
          <path d="M3 4.500h10M3 7.500h10M3 10.500h6" stroke="#050f14" />
        </Svg>
        <Badge>2</Badge>
      </ActionCenter>
      <ShowDesktop aria-label="Mostrar área de trabalho" />
    </Tray>
  </TaskBar>
);

const App = () => (
  <Window>
    <GlobalStyle />
    <AppHeader />
    <InsertRibbon />
    <Document />
    <Status />
    <WindowsTaskbar />
  </Window>
);

export default App;
